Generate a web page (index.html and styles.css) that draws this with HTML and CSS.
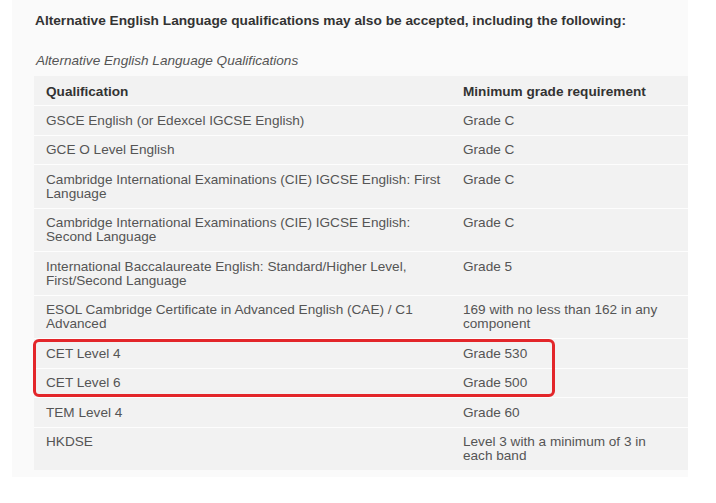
FILE: index.html
```html
<!DOCTYPE html>
<html>
<head>
<meta charset="utf-8">
<link rel="stylesheet" href="styles.css">
</head>
<body>
<div class="panel">
  <p class="intro">Alternative English Language qualifications may also be accepted, including the following:</p>
  <div class="table-wrap">
    <table class="quals">
      <caption>Alternative English Language Qualifications</caption>
      <thead>
        <tr><th class="c1">Qualification</th><th class="c2">Minimum grade requirement</th></tr>
      </thead>
      <tbody>
        <tr><td>GSCE English (or Edexcel IGCSE English)</td><td>Grade C</td></tr>
        <tr><td>GCE O Level English</td><td>Grade C</td></tr>
        <tr><td>Cambridge International Examinations (CIE) IGCSE English: First Language</td><td>Grade C</td></tr>
        <tr><td>Cambridge International Examinations (CIE) IGCSE English: Second Language</td><td>Grade C</td></tr>
        <tr><td>International Baccalaureate English: Standard/Higher Level, First/Second Language</td><td>Grade 5</td></tr>
        <tr><td>ESOL Cambridge Certificate in Advanced English (CAE) / C1 Advanced</td><td>169 with no less than 162 in any component</td></tr>
        <tr><td>CET Level 4</td><td>Grade 530</td></tr>
        <tr><td>CET Level 6</td><td>Grade 500</td></tr>
        <tr><td>TEM Level 4</td><td>Grade 60</td></tr>
        <tr class="last"><td>HKDSE</td><td>Level 3 with a minimum of 3 in each band</td></tr>
      </tbody>
    </table>
    <div class="highlight"></div>
  </div>
</div>
</body>
</html>
```
FILE: styles.css
```css
html, body {
  margin: 0;
  padding: 0;
  background: #ffffff;
}
body {
  font-family: "Liberation Sans", Arial, sans-serif;
  color: #444;
}
.panel {
  margin-left: 12px;
  width: 654px;
  padding: 13px 0 7px 22px;
  background: #fafafa;
}
.intro {
  margin: 0 0 24px 1px;
  font-size: 13.7px;
  font-weight: bold;
  color: #333;
  line-height: 16px;
}
.table-wrap {
  position: relative;
}
.quals {
  width: 654px;
  border-collapse: collapse;
  table-layout: fixed;
  font-size: 13.6px;
}
.quals caption {
  caption-side: top;
  text-align: left;
  font-style: italic;
  color: #555;
  font-size: 13.6px;
  line-height: 16px;
  padding: 0 0 7px 2px;
}
.quals th,
.quals td {
  text-align: left;
  vertical-align: top;
  padding: 7.5px 12px 7px 6px;
  line-height: 14px;
  background: #f2f2f2;
  border-bottom: 1px solid #fdfdfd;
}
.quals th:first-child,
.quals td:first-child {
  padding-left: 12px;
  padding-right: 6px;
}
.quals th {
  font-weight: bold;
  color: #333;
  padding-top: 8.5px;
  padding-bottom: 6.5px;
}
.quals td {
  color: #555;
}
.quals .c1 { width: 405px; }
.quals tr.last td { border-bottom: none; }
.highlight {
  position: absolute;
  left: -1px;
  top: 286px;
  width: 516px;
  height: 52px;
  border: 3px solid #e3262a;
  border-radius: 6px;
}
```
